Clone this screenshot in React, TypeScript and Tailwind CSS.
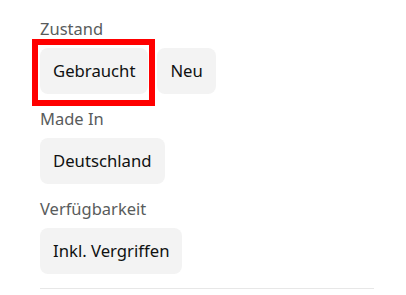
export default function App() {
  const groups = [
    { label: "Zustand", options: ["Gebraucht", "Neu"], marked: "Gebraucht" },
    { label: "Made In", options: ["Deutschland"] },
    { label: "Verfügbarkeit", options: ["Inkl. Vergriffen"] },
  ];

  return (
    <div className="h-[295px] w-[406px] bg-white pl-10 pr-[32px] pt-[19px] font-['Noto_Sans',sans-serif]">
      {groups.map((g, i) => (
        <div key={g.label} className={i === 0 ? "" : "mt-[15px]"}>
          <div className="text-[16.5px] leading-[20px] text-[#595c5c]">{g.label}</div>
          <div className="mt-[9px] flex gap-[9px]">
            {g.options.map((o) => (
              <div key={o} className="relative">
                <div className="flex h-[46px] items-center rounded-lg bg-[#f3f3f3] px-[13px] text-[16.7px] text-[#0f1111]">
                  {o}
                </div>
                {g.marked === o && (
                  <span className="pointer-events-none absolute -bottom-[12px] -left-[8px] -right-[7px] -top-[9px] border-[6px] border-[#ff0000]" />
                )}
              </div>
            ))}
          </div>
        </div>
      ))}
      <div className="mt-[14px] h-px bg-[#e7e7e7]" />
    </div>
  );
}
